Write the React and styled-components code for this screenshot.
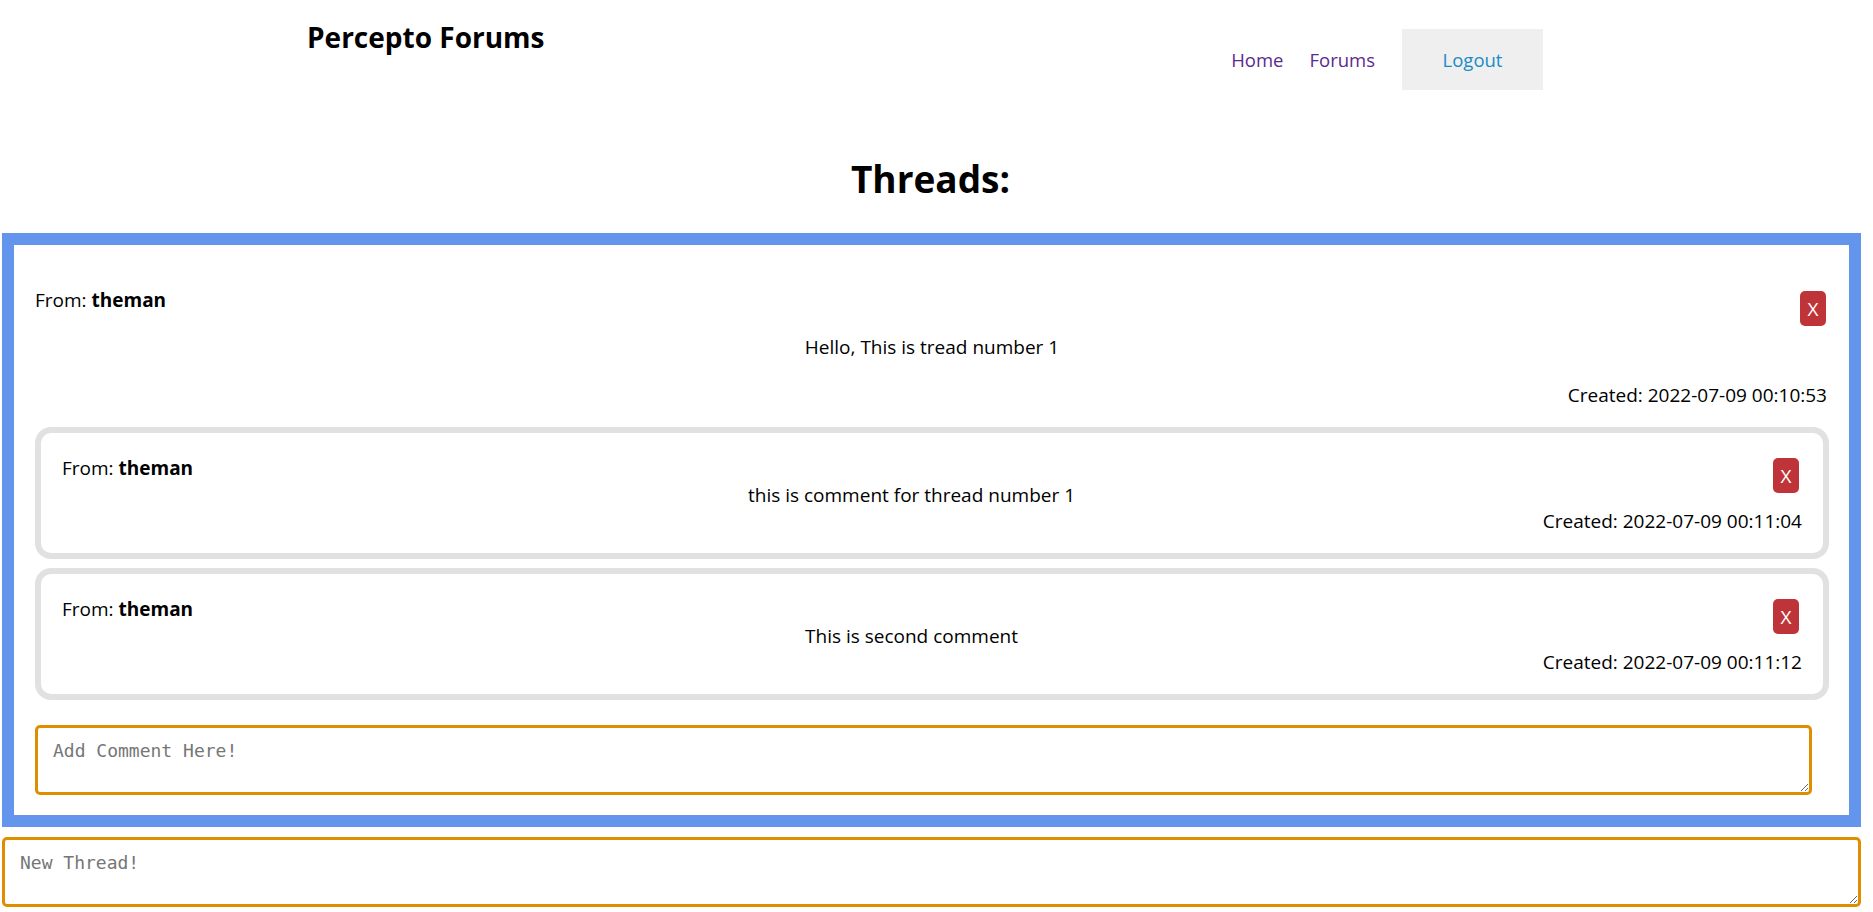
import React from 'react'
import styled, { createGlobalStyle } from 'styled-components'

const GlobalStyle = createGlobalStyle`
  body {
    margin: 0;
    background: #fff;
    color: #000;
    font-family: "Open Sans", "Noto Sans", sans-serif;
  }
  * {
    box-sizing: border-box;
  }
`

const threads = [
  {
    id: 1,
    author: 'theman',
    body: 'Hello, This is tread number 1',
    created: '2022-07-09 00:10:53',
    comments: [
      { id: 1, author: 'theman', body: 'this is comment for thread number 1', created: '2022-07-09 00:11:04' },
      { id: 2, author: 'theman', body: 'This is second comment', created: '2022-07-09 00:11:12' },
    ],
  },
]

const Page = styled.div`
  width: 1861px;
  padding-bottom: 20px;
`

const Header = styled.header`
  display: flex;
  justify-content: space-between;
  align-items: flex-start;
  padding: 20px 318px 0 307px;
`

const Title = styled.div`
  font-size: 28px;
  line-height: 34px;
  font-weight: 700;
`

const Nav = styled.nav`
  display: flex;
  align-items: center;
  gap: 26px;
  margin-top: 9px;
`

const NavLink = styled.a`
  color: #5c2a8e;
  font-size: 18.5px;
  text-decoration: none;
  cursor: pointer;
`

const LogoutButton = styled.button`
  width: 141px;
  height: 61px;
  margin-left: 1px;
  border: none;
  background: #efefef;
  color: #1b8bc6;
  font-family: inherit;
  font-size: 18.5px;
  cursor: pointer;
`

const PageTitle = styled.h1`
  margin: 65px 0 30px;
  text-align: center;
  font-size: 37px;
  line-height: 48px;
  font-weight: 700;
`

const ThreadCard = styled.section`
  margin-left: 2px;
  border: 12px solid cornflowerblue;
  padding: 43px 20px 20px 21px;
`

const HeadRow = styled.div`
  display: flex;
  justify-content: space-between;
  align-items: flex-start;
`

const Line = styled.div`
  font-size: 19px;
  line-height: 24px;
  margin-top: ${(p) => p.$gap || 0}px;
  margin-right: ${(p) => p.$right || 0}px;
  text-align: ${(p) => p.$align || 'left'};
`

const DeleteButton = styled.button`
  flex-shrink: 0;
  width: 26px;
  height: 35px;
  margin-top: ${(p) => p.$offset || 0}px;
  margin-right: ${(p) => p.$right || 0}px;
  padding: 0;
  border: none;
  border-radius: 5px;
  background: #bf3438;
  color: #fff;
  font-family: inherit;
  font-size: 19px;
  cursor: pointer;
`

const CommentList = styled.div`
  display: flex;
  flex-direction: column;
  gap: 9px;
  margin-top: 20px;
`

const CommentCard = styled.div`
  border: 6px solid #e1e1e1;
  border-radius: 16px;
  padding: 23px 21px 20px 21px;
`

const CommentTop = styled.div`
  display: flex;
  align-items: flex-start;
  gap: 12px;
`

const CommentBody = styled.div`
  flex: 1;
`

const TextBox = styled.textarea`
  display: block;
  width: ${(p) => p.$width || '100%'};
  height: 70px;
  margin-top: ${(p) => p.$gap || 0}px;
  border: 3px solid #df8e00;
  border-radius: 5px;
  padding: 12px 15px;
  font-family: "DejaVu Sans Mono", "Liberation Mono", monospace;
  font-size: 18px;
  outline: none;

  &::placeholder {
    color: #767676;
  }
`

const NewThreadBox = styled(TextBox)`
  margin-left: 2px;
  width: calc(100% - 2px);
`

function Comment({ comment }) {
  return (
    <CommentCard>
      <CommentTop>
        <CommentBody>
          <Line>From: <b>{comment.author}</b></Line>
          <Line $gap={3} $align="center">{comment.body}</Line>
        </CommentBody>
        <DeleteButton $offset={2} $right={3}>X</DeleteButton>
      </CommentTop>
      <Line $gap={2} $align="right">Created: {comment.created}</Line>
    </CommentCard>
  )
}

function Thread({ thread }) {
  return (
    <ThreadCard>
      <HeadRow>
        <Line>From: <b>{thread.author}</b></Line>
        <DeleteButton $offset={3} $right={3}>X</DeleteButton>
      </HeadRow>
      <Line $gap={9} $align="center">{thread.body}</Line>
      <Line $gap={24} $align="right" $right={2}>Created: {thread.created}</Line>
      <CommentList>
        {thread.comments.map((c) => (
          <Comment key={c.id} comment={c} />
        ))}
      </CommentList>
      <TextBox $gap={25} $width="calc(100% - 17px)" placeholder="Add Comment Here!" />
    </ThreadCard>
  )
}

export default function App() {
  return (
    <Page>
      <GlobalStyle />
      <Header>
        <Title>Percepto Forums</Title>
        <Nav>
          <NavLink>Home</NavLink>
          <NavLink>Forums</NavLink>
          <LogoutButton>Logout</LogoutButton>
        </Nav>
      </Header>
      <PageTitle>Threads:</PageTitle>
      {threads.map((t) => (
        <Thread key={t.id} thread={t} />
      ))}
      <NewThreadBox $gap={10} placeholder="New Thread!" />
    </Page>
  )
}
